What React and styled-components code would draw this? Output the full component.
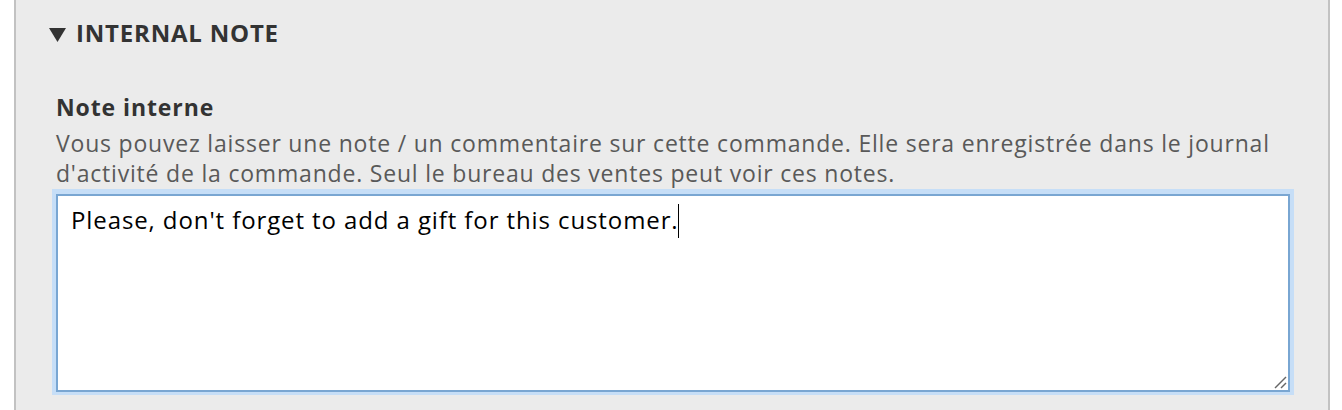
import React from "react";
import styled, { createGlobalStyle } from "styled-components";

const Global = createGlobalStyle`
  html, body { margin: 0; padding: 0; background: #fff; }
  body { font-family: "Open Sans", "Noto Sans", sans-serif; }
  * { box-sizing: border-box; }
`;

const Page = styled.div`
  padding: 0 12px 0 14px;
  height: 410px;
  overflow: hidden;
`;

const Fieldset = styled.section`
  height: 100%;
  background: #ebebeb;
  border-left: 2px solid #c2c2c2;
  border-right: 2px solid #c2c2c2;
  padding: 0 38px 0 40px;
`;

const Summary = styled.div`
  display: flex;
  align-items: flex-start;
  gap: 10px;
  margin-left: -7px;
  padding-top: 17px;
  font-size: 24px;
  line-height: 32px;
  font-weight: 700;
  letter-spacing: 0.8px;
  color: #333;
  text-transform: uppercase;
`;

const Triangle = styled.svg`
  width: 17px;
  height: 14px;
  margin-top: 11px;
  flex: none;
`;

const Label = styled.div`
  margin-top: 43px;
  font-size: 23px;
  font-weight: 700;
  line-height: 30px;
  letter-spacing: 0.9px;
  color: #333;
`;

const Description = styled.div`
  margin-top: 6px;
  font-size: 23px;
  line-height: 30px;
  letter-spacing: 0.8px;
  color: #595959;
`;

const TextBox = styled.div`
  position: relative;
  margin-top: 6px;
  height: 198px;
  background: #fff;
  border: 2px solid #79a6d2;
  box-shadow: 0 -1px 0 4px #c6def7;
  padding: 8px 13px;
  font-size: 24px;
  line-height: 30px;
  letter-spacing: 0.9px;
  color: #000;
`;

const Caret = styled.span`
  display: inline-block;
  width: 1px;
  height: 34px;
  background: #000;
  vertical-align: -9px;
  margin-left: -1px;
`;

const Resizer = styled.svg`
  position: absolute;
  right: 1px;
  bottom: 1px;
  width: 15px;
  height: 15px;
`;

export default function App() {
  return (
    <>
      <Global />
      <Page>
        <Fieldset>
          <Summary>
            <Triangle viewBox="0 0 17 14">
              <polygon points="0,0 17,0 8.5,14" fill="#333" />
            </Triangle>
            Internal note
          </Summary>
          <Label>Note interne</Label>
          <Description>
            Vous pouvez laisser une note / un commentaire sur cette commande. Elle sera enregistrée dans le journal d'activité de la commande. Seul le bureau des ventes peut voir ces notes.
          </Description>
          <TextBox role="textbox" aria-multiline="true" aria-label="Note interne">
            Please, don't forget to add a gift for this customer.<Caret />
            <Resizer viewBox="0 0 15 15">
              <line x1="3" y1="14" x2="14" y2="3" stroke="#666" strokeWidth="1.5" />
              <line x1="9" y1="14" x2="14" y2="9" stroke="#666" strokeWidth="1.5" />
            </Resizer>
          </TextBox>
        </Fieldset>
      </Page>
    </>
  );
}
